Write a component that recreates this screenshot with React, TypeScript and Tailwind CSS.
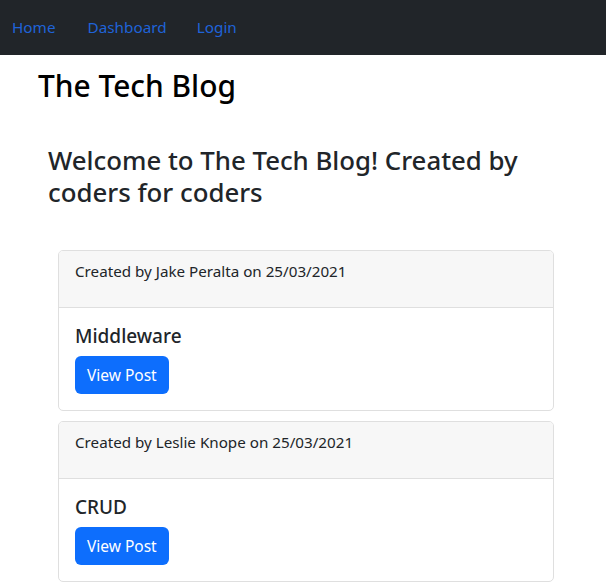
const posts = [
  { author: 'Jake Peralta', date: '25/03/2021', title: 'Middleware' },
  { author: 'Leslie Knope', date: '25/03/2021', title: 'CRUD' },
];

const App = () => {
  return (
    <div className="min-h-screen bg-white text-[#212529] font-['Noto_Sans',sans-serif]">
      <nav className="h-[55px] bg-[#212529] flex items-center px-3 text-[15.3px]">
        <a className="text-[#1f63d8] mr-8">Home</a>
        <a className="text-[#1f63d8] mr-[30px]">Dashboard</a>
        <a className="text-[#1f63d8]">Login</a>
      </nav>

      <div className="pl-[38px] pr-[52px]">
        <h1 className="text-[29.9px] leading-[37px] font-medium text-black mt-[12px] mb-[40px]">The Tech Blog</h1>

        <div className="pl-[10px]">
          <h2 className="text-[25.8px] leading-[32px] font-medium pr-[30px] mb-[42px]">
            Welcome to The Tech Blog! Created by coders for coders
          </h2>

          <div className="pl-[10px] space-y-[10px]">
            {posts.map((post) => (
              <div key={post.title} className="border border-[#dfdfdf] rounded-[5px] overflow-hidden">
                <div className="bg-[#f7f7f7] border-b border-[#dfdfdf] px-4 pt-2 pb-[24px]">
                  <p className="text-[15.2px] leading-[24px]">
                    Created by {post.author} on {post.date}
                  </p>
                </div>
                <div className="p-4">
                  <h5 className="text-[19px] leading-[24px] font-medium mb-2">{post.title}</h5>
                  <button className="bg-[#0d6efd] text-white text-[15.5px] leading-[24px] px-3 py-[7px] rounded-[6px]">
                    View Post
                  </button>
                </div>
              </div>
            ))}
          </div>
        </div>
      </div>
    </div>
  );
};

export default App;
